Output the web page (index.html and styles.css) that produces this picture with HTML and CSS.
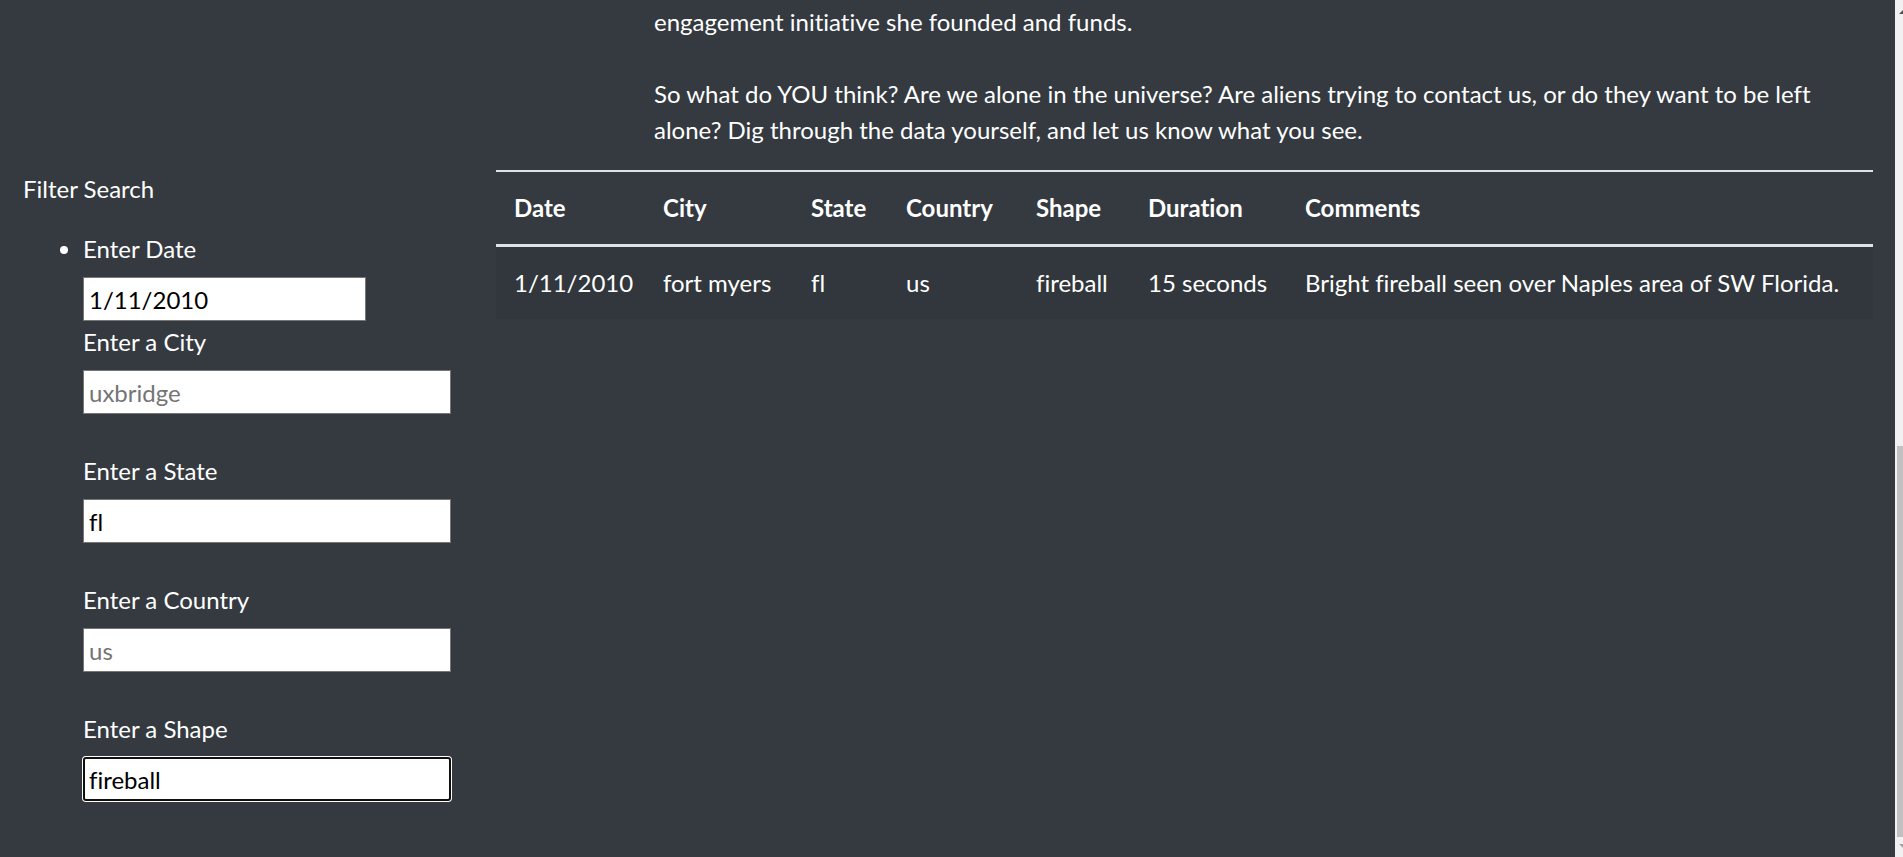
FILE: index.html
```html
<!DOCTYPE html>
<html lang="en">
<head>
<meta charset="utf-8">
<title>UFO Sightings</title>
<link rel="stylesheet" href="styles.css">
</head>
<body>
<div class="page">
  <section class="intro">
    <p>engagement initiative she founded and funds.<br><br>So what do YOU think? Are we alone in the universe? Are aliens trying to contact us, or do they want to be left alone? Dig through the data yourself, and let us know what you see.</p>
  </section>
  <div class="layout">
    <aside class="sidebar">
      <p class="filter-title">Filter Search</p>
      <ul class="filters">
        <li>
          <label class="flabel" for="datetime">Enter Date</label>
          <input class="finput narrow" id="datetime" type="text" value="1/11/2010" placeholder="1/10/2010">
          <label class="flabel" for="city">Enter a City</label>
          <input class="finput" id="city" type="text" placeholder="uxbridge">
          <label class="flabel" for="state">Enter a State</label>
          <input class="finput" id="state" type="text" value="fl" placeholder="ca">
          <label class="flabel" for="country">Enter a Country</label>
          <input class="finput" id="country" type="text" placeholder="us">
          <label class="flabel" for="shape">Enter a Shape</label>
          <input class="finput focused" id="shape" type="text" value="fireball" placeholder="circle">
        </li>
      </ul>
    </aside>
    <main class="results">
      <table class="ufo-table">
        <colgroup>
          <col class="c-date"><col class="c-city"><col class="c-state"><col class="c-country"><col class="c-shape"><col class="c-duration"><col class="c-comments">
        </colgroup>
        <thead>
          <tr><th>Date</th><th>City</th><th>State</th><th>Country</th><th>Shape</th><th>Duration</th><th>Comments</th></tr>
        </thead>
        <tbody>
          <tr><td>1/11/2010</td><td>fort myers</td><td>fl</td><td>us</td><td>fireball</td><td>15 seconds</td><td>Bright fireball seen over Naples area of SW Florida.</td></tr>
        </tbody>
      </table>
    </main>
  </div>
</div>
<div class="scrollbar"><div class="thumb"></div></div>
</body>
</html>
```

FILE: styles.css
```css
html, body {
  margin: 0;
  padding: 0;
}

body {
  background: #343a40;
  color: #ffffff;
  font-family: Lato, "Segoe UI", "Liberation Sans", sans-serif;
  font-size: 24px;
  line-height: 36px;
  font-variant-ligatures: none;
  font-feature-settings: "liga" 0, "clig" 0;
  overflow: hidden;
}

.page {
  width: calc(100% - 8px);
  min-height: 857px;
}

.intro {
  padding: 4px 22px 0 654px;
}

.intro p {
  margin: 0 0 22px;
}

.layout {
  display: flex;
  align-items: flex-start;
}

.sidebar {
  flex: none;
  width: 496px;
  box-sizing: border-box;
  padding-left: 23px;
}

.filter-title {
  margin: 1px 0 24px;
}

.filters {
  margin: 0;
  padding-left: 60px;
}

.flabel {
  display: block;
  height: 36px;
  margin-bottom: 10px;
}

.finput {
  display: block;
  box-sizing: border-box;
  width: 368px;
  height: 44px;
  margin: 0 0 39px;
  padding: 0 5px;
  font: inherit;
  font-variant-ligatures: none;
  color: #000000;
  background: #ffffff;
  border: 1px solid #767676;
  border-radius: 0;
  outline: none;
}

.finput::placeholder {
  color: #757575;
}

.narrow {
  width: 283px;
  margin-bottom: 3px;
}

.focused {
  border: 2px solid #101010;
  border-radius: 3px;
  box-shadow: 0 0 0 1px #ffffff;
  padding: 0 4px;
}

.results {
  flex: 1;
  padding-right: 22px;
}

.ufo-table {
  width: 100%;
  table-layout: fixed;
  border-collapse: separate;
  border-spacing: 0;
  color: #ffffff;
}

.c-date { width: 149px; }
.c-city { width: 148px; }
.c-state { width: 95px; }
.c-country { width: 130px; }
.c-shape { width: 112px; }
.c-duration { width: 157px; }
.c-comments { width: auto; }

.ufo-table th,
.ufo-table td {
  padding: 18px;
  text-align: left;
  vertical-align: top;
  white-space: nowrap;
}

.ufo-table th {
  font-weight: 700;
  border-top: 2px solid #dee2e6;
  border-bottom: 3px solid #dee2e6;
}

.ufo-table tbody tr {
  background: rgba(0, 0, 0, 0.05);
}

.scrollbar {
  position: fixed;
  top: 0;
  right: 0;
  width: 8px;
  height: 100%;
  background: #f1f1f1;
  overflow: hidden;
}

.scrollbar::before,
.scrollbar::after {
  content: "";
  position: absolute;
  left: 4px;
  width: 0;
  height: 0;
  border-left: 4px solid transparent;
  border-right: 4px solid transparent;
}

.scrollbar::before {
  top: 10px;
  border-bottom: 4px solid #505050;
}

.scrollbar::after {
  bottom: 9px;
  border-top: 4px solid #a3a3a3;
}

.thumb {
  position: absolute;
  left: 2px;
  right: -5px;
  top: 446px;
  bottom: 20px;
  background: #c1c1c1;
}
```
